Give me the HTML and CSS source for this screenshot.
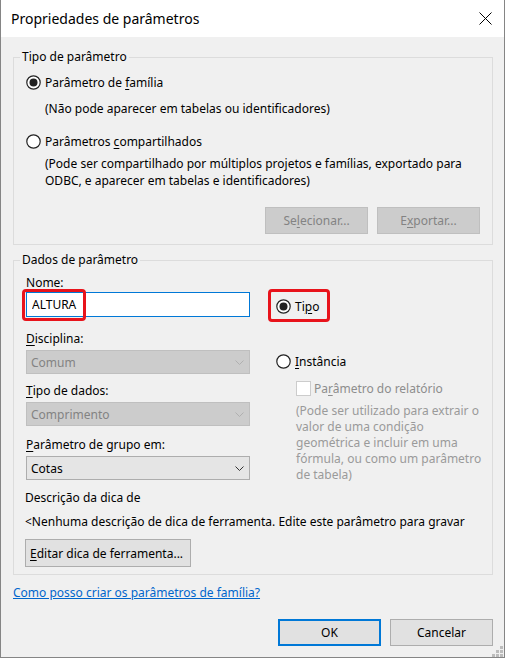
FILE: index.html
```html
<!DOCTYPE html>
<html>
	<head>
		<title>Propriedades de parâmetros</title>
		<meta http-equiv="Content-Type" content="text/html; charset=utf-8" />
		<link rel="stylesheet" href="styles.css">
	</head>
	<body>
		<div class="window">
			<div class="titlebar">
				<span class="title">Propriedades de parâmetros</span>
				<svg class="close" viewBox="0 0 13 13"><path d="M0.5 0.5 L12.5 12.5 M12.5 0.5 L0.5 12.5" stroke="#000" stroke-width="1" fill="none"/></svg>
			</div>
			<div class="content">
				<fieldset class="group group-type">
					<legend>Tipo de parâmetro</legend>
					<div class="radio-row">
						<svg class="radio-mark" viewBox="0 0 15 15"><circle cx="7.5" cy="7.5" r="6.7" fill="#fff" stroke="#222" stroke-width="1.2"/><circle cx="7.5" cy="7.5" r="4" fill="#222"/></svg>
						<span>Parâmetro de <u>f</u>amília</span>
					</div>
					<p class="hint">(Não pode aparecer em tabelas ou identificadores)</p>
					<div class="radio-row radio-second">
						<svg class="radio-mark" viewBox="0 0 15 15"><circle cx="7.5" cy="7.5" r="6.7" fill="#fff" stroke="#222" stroke-width="1.2"/></svg>
						<span>Parâmetros <u>c</u>ompartilhados</span>
					</div>
					<p class="hint hint-shared">(Pode ser compartilhado por múltiplos projetos e famílias, exportado para<br>ODBC, e aparecer em tabelas e identificadores)</p>
					<div class="group-actions">
						<button class="btn" disabled>Se<u>l</u>ecionar...</button>
						<button class="btn" disabled>E<u>x</u>portar...</button>
					</div>
				</fieldset>

				<fieldset class="group group-data">
					<legend>Dados de parâmetro</legend>
					<div class="data-grid">
						<div class="col-left">
							<div class="field-label"><u>N</u>ome:</div>
							<div class="name-field">
								<input class="text-input" type="text" value="ALTURA" />
								<span class="mark mark-name"></span>
							</div>
							<div class="field-label label-gap"><u>D</u>isciplina:</div>
							<div class="combo disabled"><span>Comum</span><svg class="chevron" viewBox="0 0 9 5"><path d="M0.5 0.5 L4.5 4.5 L8.5 0.5" fill="none" stroke="currentColor"/></svg></div>
							<div class="field-label label-gap2"><u>T</u>ipo de dados:</div>
							<div class="combo disabled"><span>Comprimento</span><svg class="chevron" viewBox="0 0 9 5"><path d="M0.5 0.5 L4.5 4.5 L8.5 0.5" fill="none" stroke="currentColor"/></svg></div>
							<div class="field-label label-gap3"><u>P</u>arâmetro de grupo em:</div>
							<div class="combo"><span>Cotas</span><svg class="chevron" viewBox="0 0 9 5"><path d="M0.5 0.5 L4.5 4.5 L8.5 0.5" fill="none" stroke="currentColor"/></svg></div>
						</div>
						<div class="col-right">
							<div class="radio-row row-tipo">
								<svg class="radio-mark" viewBox="0 0 15 15"><circle cx="7.5" cy="7.5" r="6.7" fill="#fff" stroke="#222" stroke-width="1.2"/><circle cx="7.5" cy="7.5" r="4" fill="#222"/></svg>
								<span>Ti<u>p</u>o</span>
								<span class="mark mark-tipo"></span>
							</div>
							<div class="radio-row row-instance">
								<svg class="radio-mark" viewBox="0 0 15 15"><circle cx="7.5" cy="7.5" r="6.7" fill="#fff" stroke="#222" stroke-width="1.2"/></svg>
								<span><u>I</u>nstância</span>
							</div>
							<div class="check-row">
								<span class="check-box"></span>
								<span>Pa<u>r</u>âmetro do relatório</span>
							</div>
							<p class="side-hint">(Pode ser utilizado para extrair o<br>valor de uma condição<br>geométrica e incluir em uma<br>fórmula, ou como um parâmetro<br>de tabela)</p>
						</div>
					</div>
					<div class="tip-title">Descrição da dica de</div>
					<div class="tip-text">&lt;Nenhuma descrição de dica de ferramenta. Edite este parâmetro para gravar</div>
					<button class="btn btn-tip"><u>E</u>ditar dica de ferramenta...</button>
				</fieldset>

				<a class="help-link" href="#">Como posso criar os parâmetros de família?</a>

				<div class="dialog-actions">
					<button class="btn btn-default">OK</button>
					<button class="btn">Cancelar</button>
				</div>
			</div>
			<svg class="grip" viewBox="0 0 11 11">
				<rect x="8" y="0" width="3" height="3" fill="#bcbcbc"/>
				<rect x="4" y="4" width="3" height="3" fill="#bcbcbc"/>
				<rect x="8" y="4" width="3" height="3" fill="#bcbcbc"/>
				<rect x="0" y="8" width="3" height="3" fill="#bcbcbc"/>
				<rect x="4" y="8" width="3" height="3" fill="#bcbcbc"/>
				<rect x="8" y="8" width="3" height="3" fill="#bcbcbc"/>
			</svg>
		</div>
	</body>
</html>
```

FILE: styles.css
```css
* {box-sizing: border-box;}
body {margin: 0;padding: 0;font-family: "Noto Sans", "Liberation Sans", sans-serif;font-size: 12px;color: #000;background: #fff;}
u {text-underline-offset: 2px;}

.window {position: relative;width: 505px;height: 658px;border: 1px solid #858585;border-top: 0;background: #f0f0f0;}
.titlebar {display: flex;align-items: center;justify-content: space-between;height: 37px;padding: 0 12px 0 10px;background: #fff;}
.title {font-size: 14px;}
.close {width: 13px;height: 13px;}

.content {padding: 12px 11px 0 12px;}

.group {margin: 0;padding: 8px 12px 10px 12px;border: 1px solid #dcdcdc;min-width: 0;}
.group legend {margin-left: -6px;padding: 0 2px;line-height: 16px;}
.group-data {margin-top: 7px;padding-top: 7px;padding-bottom: 7px;}

.radio-row {position: relative;display: flex;align-items: center;gap: 4px;height: 18px;}
.radio-mark {width: 15px;height: 15px;flex: none;}
.radio-second {margin-top: 15px;}
.hint {margin: 9px 0 0 19px;line-height: 17px;}
.hint-shared {margin-top: 5px;}

.group-actions {display: flex;justify-content: flex-end;gap: 9px;margin-top: 18px;}

.btn {width: 103px;height: 27px;padding: 0;border: 1px solid #adadad;background: #e1e1e1;font: inherit;color: #000;}
.btn:disabled {background: #cccccc;border-color: #bfbfbf;color: #838383;}
.btn-default {border: 2px solid #0078d7;}
.btn-tip {display: block;width: 166px;height: 28px;margin: 9px 0 0 -1px;text-align: left;padding: 0 4px;}

.data-grid {display: grid;grid-template-columns: 224px 1fr;column-gap: 26px;}
.field-label {line-height: 16px;}
.label-gap {margin-top: 14px;}
.label-gap2 {margin-top: 9px;}
.label-gap3 {margin-top: 11px;}
.name-field {position: relative;margin-top: 1px;}
.text-input {display: block;width: 224px;height: 25px;padding: 0 5px;border: 1px solid #0078d7;background: #fff;font: inherit;color: #000;outline: none;}

.combo {display: flex;align-items: center;justify-content: space-between;height: 24px;margin-top: 3px;padding: 0 5px 0 4px;border: 1px solid #adadad;background: #e5e5e5;color: #000;}
.combo .chevron {width: 9px;height: 5px;color: #333;}
.combo.disabled {background: #cccccc;border-color: #bfbfbf;color: #838383;}
.combo.disabled .chevron {color: #b0b0b0;}

.mark {position: absolute;border: 3px solid #e8131b;border-radius: 4px;pointer-events: none;}
.mark-name {left: -4px;top: -3px;width: 64px;height: 32px;}
.mark-tipo {left: -8px;top: -8px;width: 62px;height: 33px;}

.row-tipo {margin-top: 22px;}
.row-instance {margin-top: 37px;}
.check-row {display: flex;align-items: center;gap: 3px;height: 18px;margin: 9px 0 0 20px;color: #8d8d8d;}
.check-box {width: 15px;height: 15px;border: 1px solid #cccccc;background: #fff;}
.side-hint {margin: 6px 0 0 20px;line-height: 16px;color: #9a9a9a;white-space: nowrap;}

.tip-title {margin: 7px 0 0 -1px;line-height: 16px;}
.tip-text {margin: 8px 0 0 -1px;width: 455px;line-height: 16px;white-space: nowrap;overflow: hidden;}

.help-link {display: block;margin-top: 10px;line-height: 16px;color: #0066cc;text-decoration: underline;}
.help-link, .help-link:visited {color: #0066cc;}

.dialog-actions {display: flex;justify-content: flex-end;gap: 9px;margin-top: 18px;}

.grip {position: absolute;right: 1px;bottom: 0;width: 11px;height: 11px;}
```
